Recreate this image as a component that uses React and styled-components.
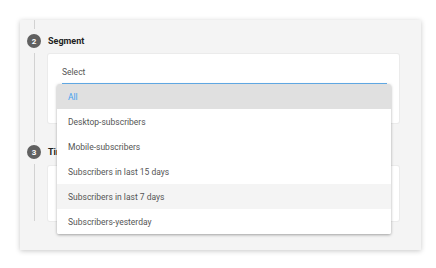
import styled, { createGlobalStyle } from "styled-components";

const Global = createGlobalStyle`
  body {
    margin: 0;
    background: #fff;
    font-family: Roboto, "Liberation Sans", sans-serif;
  }
`;

const Page = styled.div`
  padding: 20px;
`;

const Panel = styled.div`
  width: 401px;
  height: 230px;
  background: #f4f4f4;
  box-shadow: 0 1px 5px rgba(0, 0, 0, 0.22);
  display: flex;
  flex-direction: column;
`;

const Step = styled.div`
  display: flex;
  gap: 7px;
  padding-left: 7px;
`;

const Rail = styled.div`
  width: 14px;
  display: flex;
  flex-direction: column;
  align-items: center;
  padding-bottom: ${({ $tail }) => $tail}px;
`;

const Line = styled.div`
  width: 1px;
  background: #d2d2d2;
  height: ${({ $h }) => ($h ? `${$h}px` : "auto")};
  flex: ${({ $h }) => ($h ? "none" : "1")};
  margin: ${({ $m }) => $m || "0"};
`;

const Circle = styled.div`
  width: 14px;
  height: 14px;
  flex: none;
  border-radius: 50%;
  background: #616161;
  color: #fff;
  font-size: 8px;
  font-weight: 700;
  display: flex;
  align-items: center;
  justify-content: center;
`;

const Content = styled.div`
  width: 351px;
  display: flex;
  flex-direction: column;
  padding-top: ${({ $top }) => $top}px;
  padding-bottom: ${({ $bottom }) => $bottom}px;
`;

const Title = styled.div`
  height: 14px;
  display: flex;
  align-items: center;
  font-size: 9px;
  font-weight: 700;
  color: #222;
`;

const Card = styled.div`
  margin-top: ${({ $gap }) => $gap}px;
  height: ${({ $h }) => $h}px;
  box-sizing: border-box;
  background: #fff;
  border-radius: 2px;
  box-shadow: 0 0 0 1px #ebebeb;
  padding: 12px 12px 0 14px;
`;

const Field = styled.div`
  position: relative;
  width: 325px;
`;

const Label = styled.div`
  font-size: 8.5px;
  color: #555;
  height: 12px;
  line-height: 12px;
`;

const Underline = styled.div`
  margin-top: 5px;
  height: 1px;
  background: #64b0ee;
`;

const Menu = styled.ul`
  position: absolute;
  top: 18px;
  left: -5px;
  width: 334px;
  margin: 0;
  padding: 0;
  list-style: none;
  background: #fff;
  border-radius: 2px;
  box-shadow: 0 1px 3px rgba(0, 0, 0, 0.35);
  overflow: hidden;
  z-index: 2;
`;

const Option = styled.li`
  height: 25px;
  display: flex;
  align-items: center;
  padding-left: 11px;
  font-size: 8.5px;
  color: ${({ $selected }) => ($selected ? "#42a0f0" : "#555")};
  background: ${({ $selected, $hover }) =>
    $selected ? "#e0e0e0" : $hover ? "#f4f4f4" : "#fff"};
`;

const options = [
  "All",
  "Desktop-subscribers",
  "Mobile-subscribers",
  "Subscribers in last 15 days",
  "Subscribers in last 7 days",
  "Subscribers-yesterday",
];

export default function App() {
  return (
    <Page>
      <Global />
      <Panel>
        <Step>
          <Rail $tail={3}>
            <Line $h={9} $m="0 0 5px" />
            <Circle>2</Circle>
            <Line $m="5px 0 0" />
          </Rail>
          <Content $top={14} $bottom={22}>
            <Title>Segment</Title>
            <Card $gap={6} $h={69}>
              <Field>
                <Label>Select</Label>
                <Underline />
                <Menu>
                  {options.map((o, i) => (
                    <Option key={o} $selected={i === 0} $hover={i === 4}>
                      {o}
                    </Option>
                  ))}
                </Menu>
              </Field>
            </Card>
          </Content>
        </Step>
        <Step>
          <Rail $tail={29}>
            <Circle>3</Circle>
            <Line $m="5px 0 0" />
          </Rail>
          <Content $top={0} $bottom={29}>
            <Title>Time period</Title>
            <Card $gap={7} $h={55} />
          </Content>
        </Step>
      </Panel>
    </Page>
  );
}
